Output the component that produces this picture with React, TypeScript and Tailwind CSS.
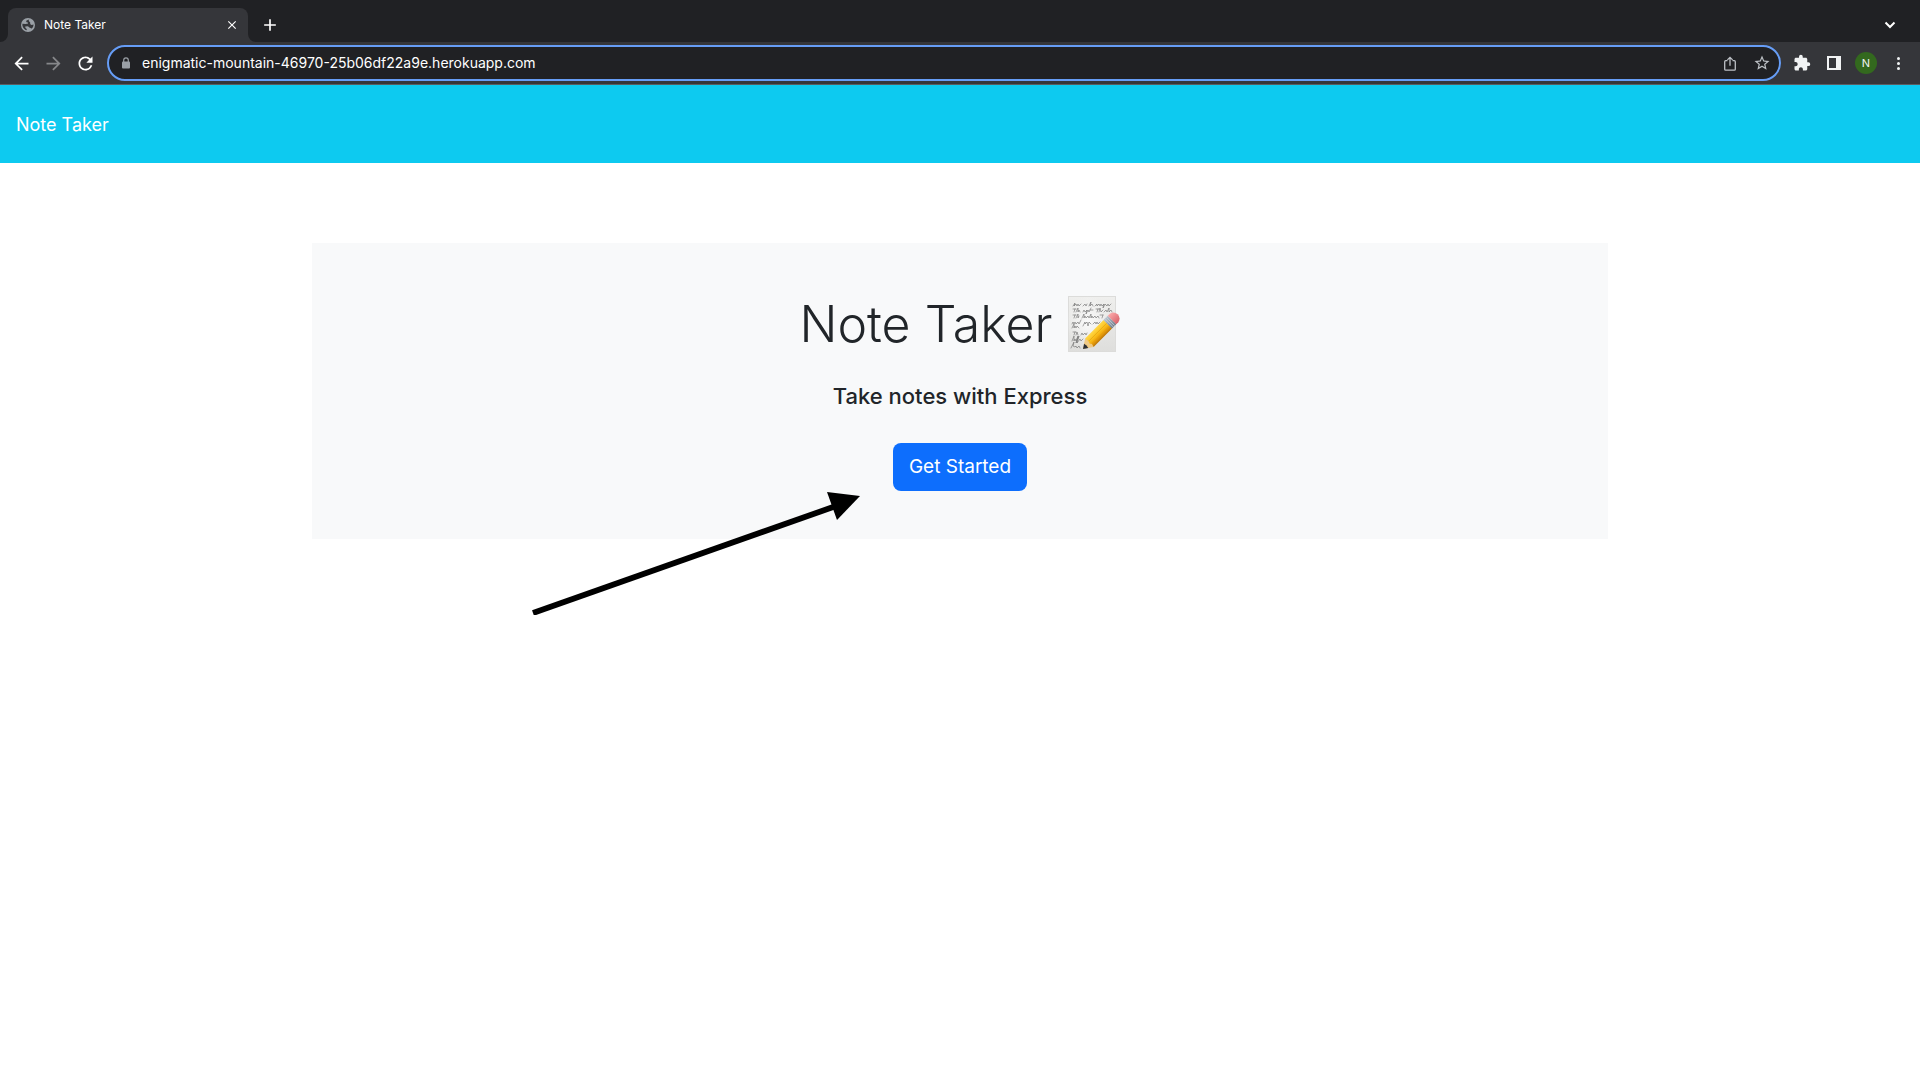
import React from "react";
import { MdAdd, MdArrowBack, MdArrowForward, MdClose, MdExtension, MdRefresh, MdStarBorder } from "react-icons/md";

function GlobeIcon() {
  return (
    <svg viewBox="0 0 14 14" className="size-3.5 shrink-0" aria-hidden="true">
      <circle cx="7" cy="7" r="7" fill="#9aa0a6" />
      <path
        d="M8.200 1.400C6 2 4.600 2.600 5.300 3.700C5.800 4.400 7 4.200 7 5.100C7 6 5.600 5.900 4.400 5.900L1.400 5.700C1 8 2.300 10.600 4.600 12L5.600 12.300L5.800 11C4.900 10.400 4 9.800 4.300 8.600L6.500 8.300C7.800 8.600 7.900 9.700 9 9.700C9.900 9.700 10.100 10.600 10.600 10.600C12 9.400 12.600 8 12.500 6.500C11.400 6.900 10.400 7.300 9.600 6.500C8.700 5.500 9.700 4.600 8.800 3.900C8 3.200 7.300 2.700 8.200 1.400Z"
        fill="#35363a"
      />
    </svg>
  );
}

function TabFoot({ className, d }: { className: string; d: string }) {
  return (
    <svg viewBox="0 0 8 8" className={`absolute bottom-0 size-2 ${className}`} aria-hidden="true">
      <path d={d} fill="#35363a" />
    </svg>
  );
}

function LockIcon() {
  return (
    <svg viewBox="0 0 8 12" className="h-3 w-2 shrink-0" aria-hidden="true">
      <path d="M1.700 5V3.200A2.300 2.300 0 0 1 6.300 3.200V5" fill="none" stroke="#9aa0a6" strokeWidth="1.200" />
      <rect x="0" y="4.500" width="8" height="7" rx="1" fill="#9aa0a6" />
    </svg>
  );
}

function ShareIcon() {
  return (
    <svg viewBox="0 0 12 15" className="h-[15px] w-3" fill="none" stroke="#bdc1c6" strokeWidth="1.300" aria-hidden="true">
      <path d="M3.500 4.700H1.700Q.7 4.700 .7 5.700V13.200Q.7 14.200 1.700 14.200H10.300Q11.300 14.200 11.300 13.200V5.700Q11.300 4.700 10.300 4.700H8.500" />
      <path d="M6 9.800V1.300M3.400 3.900L6 1.300L8.600 3.900" />
    </svg>
  );
}

function SidePanelIcon() {
  return (
    <svg viewBox="0 0 14 14" className="size-3.5" aria-hidden="true">
      <path d="M0 0H14V14H0ZM2 2V12H9V2Z" fill="#f1f3f4" fillRule="evenodd" />
    </svg>
  );
}

function MemoIcon() {
  return (
    <svg viewBox="0 0 52 58" className="h-[58px] w-[52px]" role="img" aria-label="memo">
      <defs>
        <linearGradient id="paper" x1="0" y1="0" x2="0" y2="1">
          <stop offset="0" stopColor="#efefed" />
          <stop offset="1" stopColor="#dededc" />
        </linearGradient>
        <radialGradient id="sheen">
          <stop offset="0" stopColor="#fafafa" />
          <stop offset="1" stopColor="#fafafa" stopOpacity="0" />
        </radialGradient>
        <linearGradient id="wood" x1="0" y1="0" x2="0" y2="1">
          <stop offset="0" stopColor="#ffd84a" />
          <stop offset=".4" stopColor="#fcc421" />
          <stop offset=".7" stopColor="#f0a70c" />
          <stop offset="1" stopColor="#bd7608" />
        </linearGradient>
        <linearGradient id="metal" x1="0" y1="0" x2="0" y2="1">
          <stop offset="0" stopColor="#b9c4ce" />
          <stop offset="1" stopColor="#6f7b87" />
        </linearGradient>
        <linearGradient id="rubber" x1="0" y1="0" x2="0" y2="1">
          <stop offset="0" stopColor="#fba8a9" />
          <stop offset="1" stopColor="#d9646c" />
        </linearGradient>
      </defs>
      <rect x=".5" y=".5" width="47" height="55" fill="url(#paper)" stroke="#dcdcda" />
      <ellipse cx="20" cy="26" rx="22" ry="26" fill="url(#sheen)" />
      <g fill="none" stroke="#6a6a6a" strokeWidth=".6" strokeLinecap="round" strokeLinejoin="round">
        <path d="M5 10l2-3-1 3 2-2 1 2 1-2 1 2 2-2M15 10l2-2 1 2 1-2M21 10l2-4-1 4 2-2 1 2M27 10l2-2 0 2 2-2 1 2 1-2 1 2 2-2-1 4 2-4 2 2 1-2 1 2 2-2" />
        <path d="M5 13h3M6 16l1-3M8 16l2-4 0 4 1-2 1 2M15 16l1-2 1 2 2-2-1 4 2-4 1 2 2-4M22 14h3M28 13h3M29 16l1-3M31 16l1-4 1 4 2-2M36 16l2-2 1 2 2-4 0 4 2-2 1 2" />
        <path d="M5 19h3M6 22l1-3M8 22l2-4 0 4 1-2M14 22l2-4 0 4 1-2 1 2 2-2 1 2 2-4 0 4 1-2 1 2 2-2 1 2 2-2 1 2M32 19h3M34 22l1-3" />
        <path d="M4 28l1-2 1 2 1-2 1 2 2-2 1 2 2-4M15 30l2-4 0 2 2-2 1 4 1-4 2 2M25 28l2-2 1 2 1-2 1 2 2-2" />
        <path d="M4 32l2-4 0 4 1-2 1 2 1-2 2 2" />
        <path d="M5 36h3M6 39l1-3M8 39l1-3 1 3M13 39l1-2 1 2 2-2 1 2 1-2M22 39l2-2 1 2" />
        <path d="M4 45l2-5 0 5 1-2 1 2 2-5-2 7 3-7-2 7 3-4 1 2 2-2" />
        <path d="M3 52l3-6-1 4 2 1 1-1 1 2 2-2 1 2" />
      </g>
      <path d="M17 53L34 42L50 26L48 21L20 46Z" fill="#555" opacity=".3" />
      <g transform="translate(15 53) rotate(-45)">
        <path d="M0 0L9-6L11-2L11 3L9 6Z" fill="#f0ca85" />
        <path d="M0 0L4.500-3Q5.500 0 4.500 3Z" fill="#2d3036" />
        <path d="M9-6H35V6H9L10 2.500L8.500 1L9.500-1.500Z" fill="url(#wood)" />
        <path d="M9.500-1.500H35M9.500 2.500H35" stroke="#d99308" strokeWidth=".5" />
        <path d="M35-6H41V6H35Z" fill="url(#metal)" />
        <path d="M37-6V6M39-6V6" stroke="#d1dae2" strokeWidth=".7" />
        <path d="M41-6H44Q49-5 49 0T44 6H41Z" fill="url(#rubber)" />
      </g>
    </svg>
  );
}

function Pointer() {
  return (
    <svg
      viewBox="0 0 330 126"
      className="pointer-events-none absolute top-[246px] right-[748px] h-[126px] w-[330px]"
      aria-hidden="true"
    >
      <path d="M3 124L306 17" stroke="#000" strokeWidth="5.800" />
      <path d="M330 7L297 3L307 31Z" />
    </svg>
  );
}

function BrowserBar() {
  return (
    <div className="text-white">
      <div className="flex h-[42px] items-end bg-[#202124] px-2">
        <div className="relative flex h-[34px] w-60 items-center gap-[9px] rounded-t-lg bg-[#35363a] pr-[9px] pl-[13px]">
          <TabFoot className="-left-2" d="M8 0V8H0A8 8 0 0 0 8 0Z" />
          <TabFoot className="-right-2" d="M0 0V8H8A8 8 0 0 1 0 0Z" />
          <GlobeIcon />
          <span className="grow text-xs">Note Taker</span>
          <button type="button" aria-label="Close tab">
            <MdClose className="size-3.5" />
          </button>
        </div>
        <button type="button" aria-label="New tab" className="ml-3 flex h-[34px] items-center">
          <MdAdd className="size-5" />
        </button>
        <button type="button" aria-label="Search tabs" className="mr-4 ml-auto flex h-[34px] items-center">
          <svg viewBox="0 0 12 8" className="h-2 w-3" fill="none" stroke="#fff" strokeWidth="2" aria-hidden="true">
            <path d="M1.500 1.500L6 6L10.500 1.500" />
          </svg>
        </button>
      </div>
      <div className="flex h-[43px] items-center border-b border-[#5b5d61] bg-[#35363a] pr-3 pl-[11px]">
        <div className="flex items-center gap-[11px]">
          <button type="button" aria-label="Back">
            <MdArrowBack className="size-[21px]" />
          </button>
          <button type="button" aria-label="Forward" className="text-[#86878a]">
            <MdArrowForward className="size-[21px]" />
          </button>
          <button type="button" aria-label="Reload">
            <MdRefresh className="size-[21px]" />
          </button>
        </div>
        <div className="ml-[11px] flex h-9 grow items-center rounded-full border-2 border-[#669df6] bg-[#202124] pr-2 pl-[13px]">
          <LockIcon />
          <input
            type="text"
            aria-label="Address"
            defaultValue="enigmatic-mountain-46970-25b06df22a9e.herokuapp.com"
            className="ml-3 min-w-0 grow bg-transparent text-sm outline-none"
          />
          <button type="button" aria-label="Share">
            <ShareIcon />
          </button>
          <button type="button" aria-label="Bookmark" className="ml-[17px] text-[#bdc1c6]">
            <MdStarBorder className="size-[18px]" />
          </button>
        </div>
        <div className="flex items-center pl-3 text-[#f1f3f4]">
          <button type="button" aria-label="Extensions">
            <MdExtension className="size-[18px]" />
          </button>
          <button type="button" aria-label="Side panel" className="ml-4">
            <SidePanelIcon />
          </button>
          <button
            type="button"
            aria-label="Profile"
            className="ml-3.5 flex size-[22px] items-center justify-center rounded-full bg-[#33691e] text-[11px]"
          >
            N
          </button>
          <button type="button" aria-label="Menu" className="mr-2 ml-5">
            <svg viewBox="0 0 3 13" className="h-[13px] w-[3px]" fill="currentColor" aria-hidden="true">
              <circle cx="1.500" cy="1.500" r="1.500" />
              <circle cx="1.500" cy="6.500" r="1.500" />
              <circle cx="1.500" cy="11.500" r="1.500" />
            </svg>
          </button>
        </div>
      </div>
    </div>
  );
}

export default function App() {
  return (
    <div className="min-h-screen bg-white font-['Inter',sans-serif] text-[#212529]">
      <BrowserBar />
      <header className="flex h-[78px] items-center bg-[#0dcaf0] px-4 pt-0.5">
        <a href="#" className="text-lg text-white">
          Note Taker
        </a>
      </header>
      <main className="mx-auto mt-20 max-w-[1320px] px-3">
        <section className="relative flex flex-col items-center bg-[#f8f9fa] py-12">
          <h1 className="flex items-center gap-4 text-[50px] leading-[67px] font-light">
            Note Taker <MemoIcon />
          </h1>
          <h4 className="mt-6 text-[22px] leading-[29px] font-medium">Take notes with Express</h4>
          <a
            href="#"
            role="button"
            className="mt-8 flex h-12 items-center rounded-lg bg-[#0d6efd] px-4 text-[19px] text-white"
          >
            Get Started
          </a>
          <Pointer />
        </section>
      </main>
    </div>
  );
}
